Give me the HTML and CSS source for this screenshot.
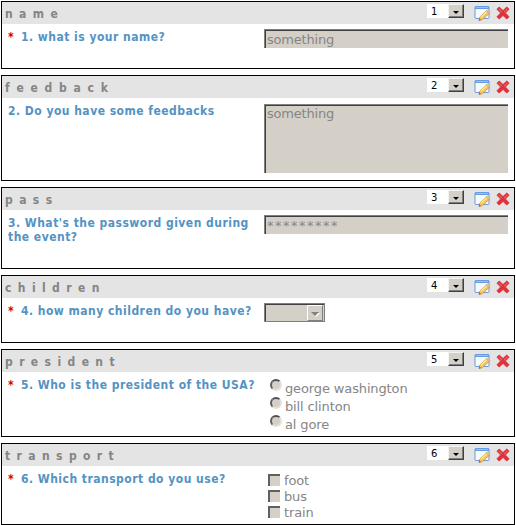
FILE: index.html
```
<!DOCTYPE html>
<html lang="en">
<head>
<meta charset="utf-8">
<title>Form fields</title>
<link rel="stylesheet" href="styles.css">
</head>
<body>
<svg class="defs" width="0" height="0" aria-hidden="true">
  <symbol id="edit" viewBox="0 0 17 17">
    <rect x="1" y="1.5" width="14" height="12" rx="1" fill="#f5faff" stroke="#6b99dc"/>
    <path d="M1 1.5h14v2.5H1z" fill="#659be5"/>
    <path d="M2 2h12v1H2z" fill="#9ac3f5"/>
    <path d="M5 15.5l.8-3.5L12.6 5.8l2.6 2.6-6.7 6.2z" fill="#f5c65a" stroke="#c99238" stroke-width=".8"/>
    <path d="M6.8 12.2L13 6.5" stroke="#ffeaa0" stroke-width="1.2"/>
    <path d="M12.3 5.8l1-1 2.7 2.7-1 1z" fill="#e9c5a0" stroke="#c9955d" stroke-width=".5"/>
    <path d="M4.8 15.7l.6-2.2 1.6 1.5z" fill="#8b6544"/>
  </symbol>
  <symbol id="remove" viewBox="0 0 14 14">
    <path d="M3.2 1L7 4.6 10.8 1 13 3.2 9.4 7l3.6 3.8-2.2 2.2L7 9.4 3.2 13 1 10.8 4.6 7 1 3.2z" fill="#e2303b" stroke="#d03c42" stroke-linejoin="round"/>
    <path d="M2.6 3L6 6.2M11.4 3L8 6.2" fill="none" stroke="#f27878" stroke-width="1"/>
  </symbol>
</svg>
<main class="form">
  <section class="field h68">
    <header class="bar"><h2 class="name">name</h2><div class="order"><span class="num">1</span><span class="drop"></span></div><svg class="edit"><use href="#edit"/></svg><svg class="remove"><use href="#remove"/></svg></header>
    <div class="body"><div class="question"><span class="star">*</span><span class="q">1. what is your name?</span></div><div class="answer"><div class="input">something</div></div></div>
  </section>
  <section class="field h106">
    <header class="bar"><h2 class="name wide">feedback</h2><div class="order"><span class="num">2</span><span class="drop"></span></div><svg class="edit"><use href="#edit"/></svg><svg class="remove"><use href="#remove"/></svg></header>
    <div class="body"><div class="question"><span class="q">2. Do you have some feedbacks</span></div><div class="answer"><div class="input area">something</div></div></div>
  </section>
  <section class="field h82">
    <header class="bar"><h2 class="name">pass</h2><div class="order"><span class="num">3</span><span class="drop"></span></div><svg class="edit"><use href="#edit"/></svg><svg class="remove"><use href="#remove"/></svg></header>
    <div class="body"><div class="question"><span class="q">3. What's the password given during<br>the event?</span></div><div class="answer"><div class="input pass">*********</div></div></div>
  </section>
  <section class="field h68">
    <header class="bar"><h2 class="name">children</h2><div class="order"><span class="num">4</span><span class="drop"></span></div><svg class="edit"><use href="#edit"/></svg><svg class="remove"><use href="#remove"/></svg></header>
    <div class="body"><div class="question"><span class="star">*</span><span class="q">4. how many children do you have?</span></div><div class="answer"><div class="select"><span class="drop off"></span></div></div></div>
  </section>
  <section class="field h88">
    <header class="bar"><h2 class="name">president</h2><div class="order"><span class="num">5</span><span class="drop"></span></div><svg class="edit"><use href="#edit"/></svg><svg class="remove"><use href="#remove"/></svg></header>
    <div class="body"><div class="question"><span class="star">*</span><span class="q">5. Who is the president of the USA?</span></div>
    <div class="answer radios"><div class="choice"><i class="radio"></i>george washington</div><div class="choice"><i class="radio"></i>bill clinton</div><div class="choice"><i class="radio"></i>al gore</div></div></div>
  </section>
  <section class="field h82">
    <header class="bar"><h2 class="name">transport</h2><div class="order"><span class="num">6</span><span class="drop"></span></div><svg class="edit"><use href="#edit"/></svg><svg class="remove"><use href="#remove"/></svg></header>
    <div class="body"><div class="question"><span class="star">*</span><span class="q">6. Which transport do you use?</span></div>
    <div class="answer checks"><div class="choice"><i class="check"></i>foot</div><div class="choice"><i class="check"></i>bus</div><div class="choice"><i class="check"></i>train</div></div></div>
  </section>
</main>
</body>
</html>
```
FILE: styles.css
```
* { box-sizing: border-box; }
body { margin: 0; background: #fff; font-family: Verdana, "DejaVu Sans", sans-serif; overflow: hidden; }
.defs { position: absolute; }
.form { width: 514px; margin: 1px 0 0 1px; display: flex; flex-direction: column; gap: 6px; }
.field { border: 1px solid #000; overflow: hidden; }
.h68 { height: 68px; }
.h82 { height: 82px; }
.h88 { height: 88px; }
.h106 { height: 106px; }
.bar { height: 22px; background: #e4e4e4; display: flex; align-items: flex-start; padding-left: 3px; }
.name { margin: 0; flex: 1; font: bold 12px/24px Tahoma, "DejaVu Sans Condensed", sans-serif; color: #858585; letter-spacing: 6.4px; }
.wide { letter-spacing: 6.75px; }
.order { display: flex; width: 37px; height: 14px; margin: 2px 10px 0 0; background: #fff; }
.num { width: 21px; padding-left: 4px; font: 10px/15px "DejaVu Sans", sans-serif; color: #000; }
.drop { width: 16px; height: 14px; background: #d4d0c8; border: 1px solid; border-color: #f4f2ee #404040 #404040 #f4f2ee; box-shadow: inset -1px -1px #808080; display: grid; place-items: center; }
.drop::after { content: ""; border: solid transparent; border-width: 3px 3px 0; border-top-color: #000; margin-top: 2px; }
.edit { width: 17px; height: 17px; margin-top: 3px; }
.remove { width: 14px; height: 14px; margin: 4px 4px 0 5px; }
.body { display: flex; }
.question { width: 262px; padding: 6px 0 0 6px; display: flex; font: bold 12px/14px Tahoma, "DejaVu Sans Condensed", sans-serif; color: #5593c3; }
.star { width: 13px; color: #c00; }
.q { white-space: nowrap; letter-spacing: .48px; }
.answer { color: #858585; font-size: 13px; padding-top: 5px; }
.input { width: 244px; height: 19px; background: #d4d0c8; border: solid #808080; border-width: 1px 0 0 1px; box-shadow: inset 1px 1px #404040; padding-left: 2px; line-height: 20px; letter-spacing: -.2px; }
.area { height: 69px; margin-top: 1px; line-height: 18px; }
.pass { letter-spacing: 1.5px; }
.select { width: 61px; height: 19px; background: #d4d0c8; border: 1px solid #808080; box-shadow: inset 1px 1px #404040; display: flex; justify-content: flex-end; padding: 1px; }
.off { height: 16px; border-color: #fff #808080 #808080 #fff; box-shadow: none; }
.off::after { border-width: 4px 4px 0; border-top-color: #808080; filter: drop-shadow(1px 1px #fff); margin-top: 1px; }
.choice { display: flex; letter-spacing: -.13px; }
.radios { padding: 7px 0 0 6px; }
.radios .choice { height: 18px; line-height: 20px; gap: 3px; }
.radio { width: 12px; height: 12px; border-radius: 50%; background: #d4d0c8; border: 2px solid; border-color: #505050 #e4e1dc #e4e1dc #606060; }
.checks { padding: 7px 0 0 4px; }
.checks .choice { height: 16px; line-height: 16px; gap: 4px; }
.check { width: 12px; height: 12px; margin-top: 1px; background: #d4d0c8; border: solid #606060; border-width: 2px 0 0 2px; }
```
